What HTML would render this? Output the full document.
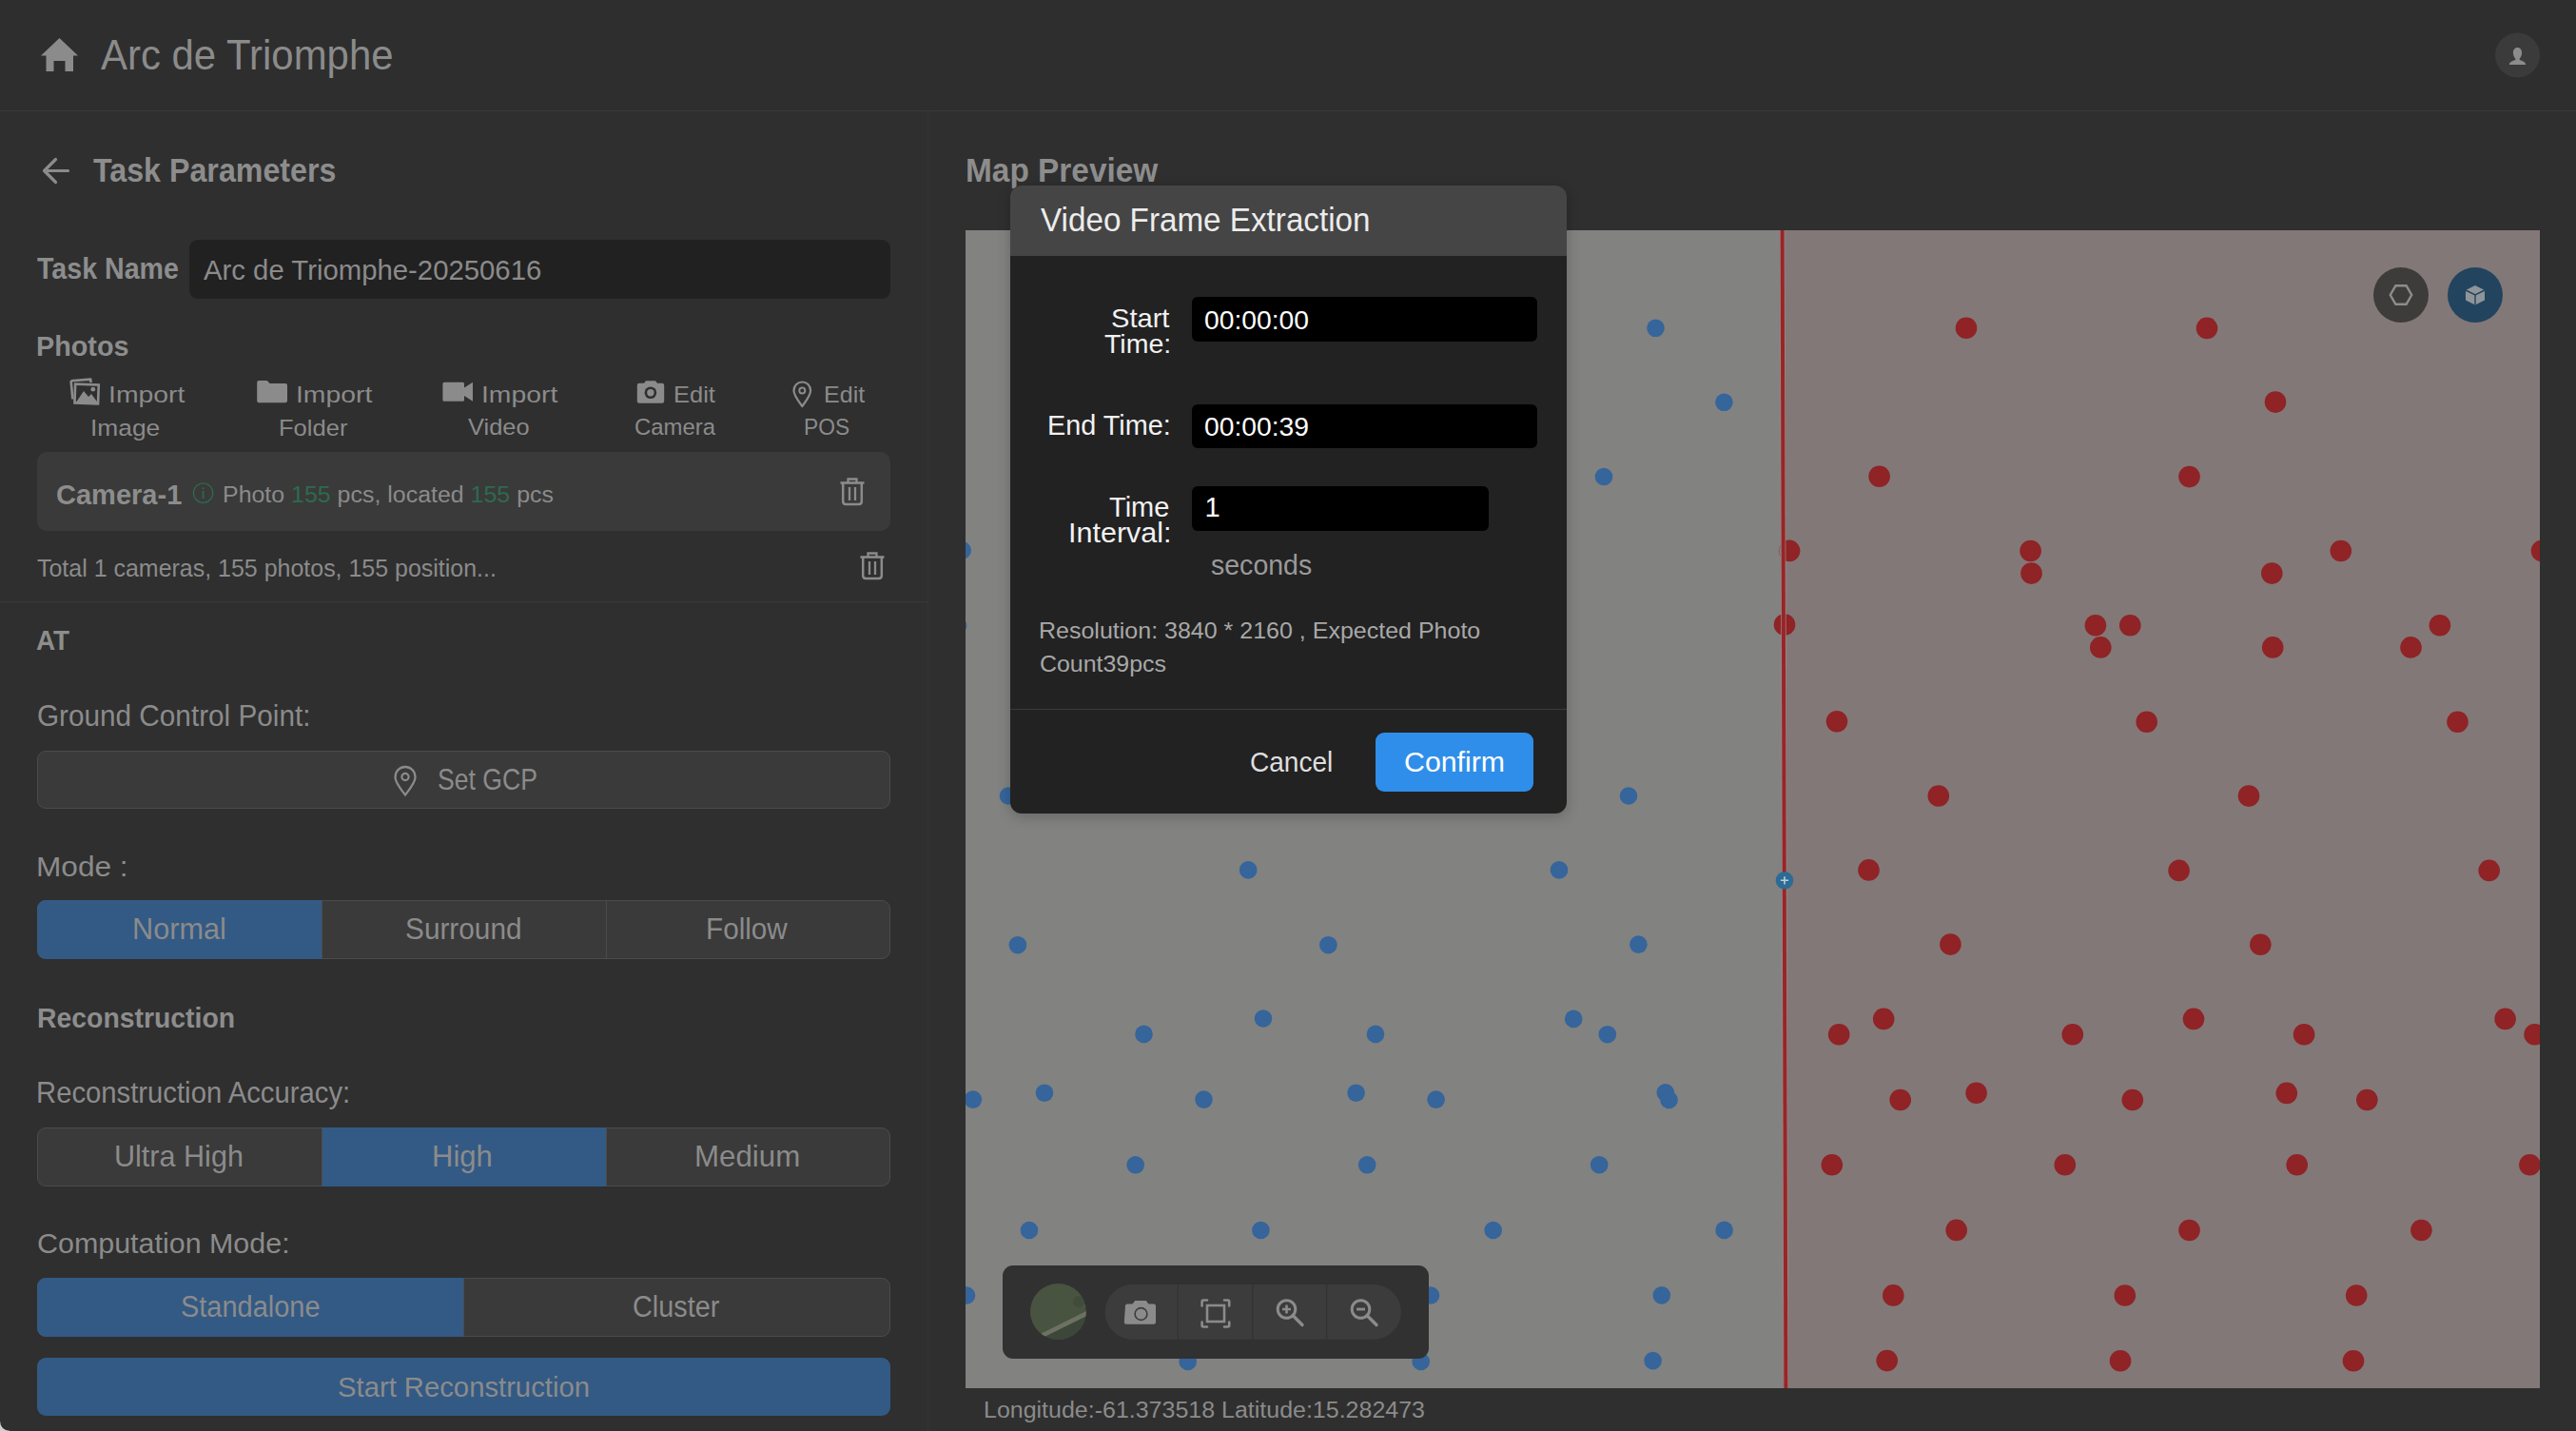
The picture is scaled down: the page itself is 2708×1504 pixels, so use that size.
<!DOCTYPE html>
<html><head><meta charset="utf-8"><style>
html,body{margin:0;padding:0}
body{width:2708px;height:1504px;overflow:hidden;position:relative;background:#2f2f2f;font-family:"Liberation Sans",sans-serif}
.t{position:absolute;white-space:nowrap;line-height:1;transform-origin:0 0}
.g{color:#2d6a4f}
svg{display:block}
</style></head><body>
<div style="position:absolute;left:0px;top:0px;width:2708px;height:116px;background:#2e2e2e;"></div>
<div style="position:absolute;left:0px;top:116px;width:2708px;height:1px;background:#393939;"></div>
<div style="position:absolute;left:975px;top:117px;width:1px;height:1387px;background:#343434;"></div>
<div style="position:absolute;left:0px;top:632px;width:975px;height:1px;background:#393939;"></div>
<svg style="position:absolute;left:0;top:0" width="120" height="100">
<path d="M62.5 40 L82 58.5 L77 58.5 L77 75 L68.5 75 L68.5 64 L56.5 64 L56.5 75 L48.5 75 L48.5 58.5 L43 58.5 Z" fill="#8b8b8b"/></svg>
<div class="t" style="left:105.8px;top:35.4px;font-size:45.2px;font-weight:400;color:#8b8b8b;transform:scaleX(0.9276)">Arc de Triomphe</div>
<svg style="position:absolute;left:2620px;top:32px" width="54" height="54">
<circle cx="26.5" cy="26" r="23.5" fill="#3b3b3b"/>
<path d="M26.5 18 c3.2 0 4.6 2.6 4.6 5.4 c0 2.6 -1.2 4.8 -2.4 6 l0 1.6 c3.2 0.8 5.8 2.2 6.4 4.3 l0 0.7 l-17.2 0 l0 -0.7 c0.6 -2.1 3.2 -3.5 6.4 -4.3 l0 -1.6 c-1.2 -1.2 -2.4 -3.4 -2.4 -6 c0 -2.8 1.4 -5.4 4.6 -5.4 z" fill="#8c8c8c"/></svg>
<svg style="position:absolute;left:40px;top:160px" width="40" height="40">
<path d="M31.5 19.5 H7.5 M18.5 7.5 L6.5 19.5 L18.5 31.5" stroke="#8b8b8b" stroke-width="3.2" fill="none" stroke-linecap="round" stroke-linejoin="round"/></svg>
<div class="t" style="left:97.6px;top:162px;font-size:35.6px;font-weight:700;color:#8d8d8d;transform:scaleX(0.9053)">Task Parameters</div>
<div class="t" style="left:39.4px;top:267px;font-size:31.0px;font-weight:700;color:#8d8d8d;transform:scaleX(0.923)">Task Name</div>
<div style="position:absolute;left:199px;top:252px;width:737px;height:62px;background:#212121;border-radius:9px"></div>
<div class="t" style="left:213.5px;top:269px;font-size:29.8px;font-weight:400;color:#8b8b8b;transform:scaleX(0.9839)">Arc de Triomphe-20250616</div>
<div class="t" style="left:38.06px;top:349px;font-size:29.7px;font-weight:700;color:#8d8d8d;transform:scaleX(0.9694)">Photos</div>
<svg style="position:absolute;left:0;top:390px" width="975" height="45">
 <g transform="translate(0,0)">
  <path d="M74.6 10.2 L95.2 8.6 L95.6 12.2" stroke="#8b8b8b" stroke-width="2.6" fill="none" stroke-linejoin="round"/>
  <path d="M74.6 10.2 L76.4 29.5" stroke="#8b8b8b" stroke-width="2.6" fill="none"/>
  <rect x="78.8" y="14" width="24.6" height="20" stroke="#8b8b8b" stroke-width="2.6" fill="none" transform="rotate(2 91 24)"/>
  <path d="M79.5 33.5 L88 21 L93 27 L96 24 L103 33.5 Z" fill="#8b8b8b"/>
  <circle cx="97.8" cy="19.2" r="2.4" fill="#8b8b8b"/>
 </g>
 <path d="M270.2 12 q0-2 2-2 h8.5 l3 3 h16.3 q2 0 2 2 v16.3 q0 2 -2 2 h-27.8 q-2 0 -2-2 z" fill="#8b8b8b"/>
 <path d="M465.4 13.3 q0-1.5 1.5-1.5 h19.6 q1.5 0 1.5 1.5 v4.2 l9-5.7 v20 l-9 -5.7 v4.2 q0 1.5 -1.5 1.5 h-19.6 q-1.5 0 -1.5 -1.5 z" fill="#8b8b8b"/>
 <path d="M669.8 15 q0-2.2 2.2-2.2 h5 l2-2.5 h10 l2 2.5 h5 q2.2 0 2.2 2.2 v16.4 q0 2.4 -2.2 2.4 h-24 q-2.2 0 -2.2 -2.4 z" fill="#8b8b8b"/>
 <circle cx="683.9" cy="22.8" r="6.3" fill="#2f2f2f"/><circle cx="683.9" cy="22.8" r="3.7" fill="#8b8b8b"/>
 <path d="M843.3 37 C839 31 834.5 25.5 834.5 20.8 C834.5 15.3 838.5 11.5 843.3 11.5 C848.1 11.5 852.1 15.3 852.1 20.8 C852.1 25.5 847.6 31 843.3 37 Z" stroke="#8b8b8b" stroke-width="2.2" fill="none" stroke-linejoin="round"/>
 <circle cx="843.3" cy="20.6" r="3" stroke="#8b8b8b" stroke-width="2" fill="none"/>
</svg>
<div class="t" style="left:113.65px;top:403px;font-size:24.1px;font-weight:400;color:#8b8b8b;transform:scaleX(1.1773)">Import</div>
<div class="t" style="left:94.81px;top:437.5px;font-size:24.1px;font-weight:400;color:#8b8b8b;transform:scaleX(1.0938)">Image</div>
<div class="t" style="left:310.55px;top:403px;font-size:24.1px;font-weight:400;color:#8b8b8b;transform:scaleX(1.1758)">Import</div>
<div class="t" style="left:292.88px;top:437.5px;font-size:24.1px;font-weight:400;color:#8b8b8b;transform:scaleX(1.0606)">Folder</div>
<div class="t" style="left:505.85px;top:403.2px;font-size:24.1px;font-weight:400;color:#8b8b8b;transform:scaleX(1.1758)">Import</div>
<div class="t" style="left:492.0px;top:437.4px;font-size:24.1px;font-weight:400;color:#8b8b8b;transform:scaleX(1.0557)">Video</div>
<div class="t" style="left:707.58px;top:402.6px;font-size:24.1px;font-weight:400;color:#8b8b8b;transform:scaleX(1.0575)">Edit</div>
<div class="t" style="left:666.71px;top:437.4px;font-size:24.1px;font-weight:400;color:#8b8b8b;transform:scaleX(0.9918)">Camera</div>
<div class="t" style="left:865.62px;top:402.6px;font-size:24.1px;font-weight:400;color:#8b8b8b;transform:scaleX(1.04)">Edit</div>
<div class="t" style="left:845.11px;top:437.4px;font-size:24.1px;font-weight:400;color:#8b8b8b;transform:scaleX(0.9458)">POS</div>
<div style="position:absolute;left:39px;top:475px;width:897px;height:83px;background:#3a3a3a;border-radius:10px"></div>
<div class="t" style="left:58.99px;top:505.8px;font-size:28.8px;font-weight:700;color:#8d8d8d;transform:scaleX(1.0077)">Camera-1</div>
<svg style="position:absolute;left:200px;top:505px" width="28" height="28">
<circle cx="13.6" cy="13.1" r="10.2" stroke="#2d6a4f" stroke-width="1.3" fill="none"/>
<rect x="12.8" y="11" width="1.6" height="8" fill="#2d6a4f"/><circle cx="13.6" cy="8.3" r="1" fill="#2d6a4f"/></svg>
<div class="t" style="left:234.48px;top:508px;font-size:24.7px;font-weight:400;color:#8b8b8b;transform:scaleX(1.0099)">Photo <span class="g">155</span> pcs, located <span class="g">155</span> pcs</div>
<svg style="position:absolute;left:882px;top:501px" width="30" height="32">
<path d="M1.5 6.5 H26.5" stroke="#8b8b8b" stroke-width="2.6"/>
<path d="M9.5 6 V2.5 H18.5 V6" stroke="#8b8b8b" stroke-width="2.3" fill="none"/>
<path d="M4.2 7 V26 Q4.2 29 7.2 29 H20.8 Q23.8 29 23.8 26 V7" stroke="#8b8b8b" stroke-width="2.5" fill="none"/>
<path d="M11 11 V25 M17 11 V25" stroke="#8b8b8b" stroke-width="2.3"/></svg>
<div class="t" style="left:39.3px;top:585px;font-size:24.9px;font-weight:400;color:#8b8b8b;transform:scaleX(1.0029)">Total 1 cameras, 155 photos, 155 position...</div>
<svg style="position:absolute;left:903px;top:579px" width="30" height="32">
<path d="M1.5 6.5 H26.5" stroke="#8b8b8b" stroke-width="2.6"/>
<path d="M9.5 6 V2.5 H18.5 V6" stroke="#8b8b8b" stroke-width="2.3" fill="none"/>
<path d="M4.2 7 V26 Q4.2 29 7.2 29 H20.8 Q23.8 29 23.8 26 V7" stroke="#8b8b8b" stroke-width="2.5" fill="none"/>
<path d="M11 11 V25 M17 11 V25" stroke="#8b8b8b" stroke-width="2.3"/></svg>
<div class="t" style="left:38.33px;top:658.8px;font-size:28.8px;font-weight:700;color:#8d8d8d;transform:scaleX(0.9694)">AT</div>
<div class="t" style="left:38.84px;top:737.4px;font-size:31.0px;font-weight:400;color:#8b8b8b;transform:scaleX(0.9586)">Ground Control Point:</div>
<div style="position:absolute;left:39px;top:789px;width:897px;height:61px;background:#3a3a3a;border:1px solid #4b4b4b;box-sizing:border-box;border-radius:9px"></div>
<svg style="position:absolute;left:410px;top:800px" width="32" height="40">
<path d="M16 35.5 C11 29 5.5 22.5 5.5 17 C5.5 10.5 10.2 6 16 6 C21.8 6 26.5 10.5 26.5 17 C26.5 22.5 21 29 16 35.5 Z" stroke="#8b8b8b" stroke-width="2.3" fill="none" stroke-linejoin="round"/>
<circle cx="16" cy="16.5" r="3.6" stroke="#8b8b8b" stroke-width="2.2" fill="none"/></svg>
<div class="t" style="left:459.63px;top:804.2px;font-size:30.5px;font-weight:400;color:#8b8b8b;transform:scaleX(0.8729)">Set GCP</div>
<div class="t" style="left:37.89px;top:896px;font-size:29.9px;font-weight:400;color:#8b8b8b;transform:scaleX(1.0575)">Mode :</div>
<div style="position:absolute;left:39px;top:946px;width:897px;height:62px;background:#3a3a3a;border:1px solid #4b4b4b;box-sizing:border-box;border-radius:9px"></div>
<div style="position:absolute;left:39px;top:946px;width:299px;height:62px;background:#335a84;border-radius:9px 0 0 9px"></div>
<div style="position:absolute;left:338px;top:947px;width:1px;height:60px;background:#4b4b4b;"></div>
<div style="position:absolute;left:637px;top:947px;width:1px;height:60px;background:#4b4b4b;"></div>
<div class="t" style="left:138.93px;top:961.3px;font-size:31.1px;font-weight:400;color:#8b8b8b;transform:scaleX(0.9856)">Normal</div>
<div class="t" style="left:426.04px;top:961.3px;font-size:31.1px;font-weight:400;color:#8b8b8b;transform:scaleX(0.9584)">Surround</div>
<div class="t" style="left:742.09px;top:961.3px;font-size:31.1px;font-weight:400;color:#8b8b8b;transform:scaleX(0.9545)">Follow</div>
<div class="t" style="left:38.51px;top:1054.7px;font-size:30.1px;font-weight:700;color:#8d8d8d;transform:scaleX(0.9429)">Reconstruction</div>
<div class="t" style="left:37.88px;top:1133px;font-size:30.5px;font-weight:400;color:#8b8b8b;transform:scaleX(0.9594)">Reconstruction Accuracy:</div>
<div style="position:absolute;left:39px;top:1184.5px;width:897px;height:62px;background:#3a3a3a;border:1px solid #4b4b4b;box-sizing:border-box;border-radius:9px"></div>
<div style="position:absolute;left:337.5px;top:1184.5px;width:299.5px;height:62px;background:#335a84;"></div>
<div style="position:absolute;left:337.5px;top:1185.5px;width:1px;height:60px;background:#4b4b4b;"></div>
<div style="position:absolute;left:637px;top:1185.5px;width:1px;height:60px;background:#4b4b4b;"></div>
<div class="t" style="left:120.23px;top:1199.8px;font-size:31.1px;font-weight:400;color:#8b8b8b;transform:scaleX(0.983)">Ultra High</div>
<div class="t" style="left:454.4px;top:1199.8px;font-size:31.1px;font-weight:400;color:#8b8b8b;transform:scaleX(0.9984)">High</div>
<div class="t" style="left:729.89px;top:1199.8px;font-size:31.1px;font-weight:400;color:#8b8b8b;transform:scaleX(1.0056)">Medium</div>
<div class="t" style="left:38.78px;top:1292px;font-size:29.8px;font-weight:400;color:#8b8b8b;transform:scaleX(1.0214)">Computation Mode:</div>
<div style="position:absolute;left:39px;top:1342.5px;width:897px;height:62px;background:#3a3a3a;border:1px solid #4b4b4b;box-sizing:border-box;border-radius:9px"></div>
<div style="position:absolute;left:39px;top:1342.5px;width:447.5px;height:62px;background:#335a84;border-radius:9px 0 0 9px"></div>
<div style="position:absolute;left:486.5px;top:1343.5px;width:1px;height:60px;background:#4b4b4b;"></div>
<div class="t" style="left:189.66px;top:1358.6px;font-size:30.8px;font-weight:400;color:#8b8b8b;transform:scaleX(0.9403)">Standalone</div>
<div class="t" style="left:665.46px;top:1358.6px;font-size:30.8px;font-weight:400;color:#8b8b8b;transform:scaleX(0.9365)">Cluster</div>
<div style="position:absolute;left:39px;top:1426.5px;width:897px;height:61px;background:#335a84;border-radius:9px"></div>
<div class="t" style="left:355.02px;top:1443.3px;font-size:29.8px;font-weight:400;color:#8b8b8b;transform:scaleX(0.9813)">Start Reconstruction</div>
<div class="t" style="left:1014.9px;top:161px;font-size:35.2px;font-weight:700;color:#8d8d8d;transform:scaleX(0.9491)">Map Preview</div>
<div style="position:absolute;left:1015px;top:242px;width:859px;height:1217px;background:#828281;"></div>
<div style="position:absolute;left:1874px;top:242px;width:796px;height:1217px;background:#827877;"></div>
<svg style="position:absolute;left:1015px;top:242px" width="1655" height="1217" viewBox="1015 242 1655 1217"><circle cx="1740.5" cy="344.8" r="9.3" fill="#35659a"/><circle cx="1812.4" cy="422.8" r="9.3" fill="#35659a"/><circle cx="1686" cy="501" r="9.3" fill="#35659a"/><circle cx="1011.7" cy="578.5" r="9.3" fill="#35659a"/><circle cx="1007" cy="657.5" r="9.3" fill="#35659a"/><circle cx="1060" cy="836.5" r="9.3" fill="#35659a"/><circle cx="1712" cy="836.5" r="9.3" fill="#35659a"/><circle cx="1312.2" cy="914.4" r="9.3" fill="#35659a"/><circle cx="1639" cy="914.4" r="9.3" fill="#35659a"/><circle cx="1069.9" cy="993.2" r="9.3" fill="#35659a"/><circle cx="1396.4" cy="993.2" r="9.3" fill="#35659a"/><circle cx="1722.4" cy="992.6" r="9.3" fill="#35659a"/><circle cx="1202.5" cy="1086.9" r="9.3" fill="#35659a"/><circle cx="1328" cy="1070.5" r="9.3" fill="#35659a"/><circle cx="1446" cy="1086.9" r="9.3" fill="#35659a"/><circle cx="1654.2" cy="1070.9" r="9.3" fill="#35659a"/><circle cx="1689.8" cy="1087.2" r="9.3" fill="#35659a"/><circle cx="1022.9" cy="1155.6" r="9.3" fill="#35659a"/><circle cx="1098" cy="1148.7" r="9.3" fill="#35659a"/><circle cx="1265.5" cy="1155.6" r="9.3" fill="#35659a"/><circle cx="1425.6" cy="1148.7" r="9.3" fill="#35659a"/><circle cx="1509.6" cy="1155.6" r="9.3" fill="#35659a"/><circle cx="1750.8" cy="1148.3" r="9.3" fill="#35659a"/><circle cx="1754.5" cy="1156" r="9.3" fill="#35659a"/><circle cx="1193.7" cy="1224.3" r="9.3" fill="#35659a"/><circle cx="1437.2" cy="1224.3" r="9.3" fill="#35659a"/><circle cx="1681.2" cy="1224.2" r="9.3" fill="#35659a"/><circle cx="1082" cy="1293" r="9.3" fill="#35659a"/><circle cx="1325.4" cy="1293" r="9.3" fill="#35659a"/><circle cx="1569.7" cy="1293" r="9.3" fill="#35659a"/><circle cx="1812.6" cy="1292.9" r="9.3" fill="#35659a"/><circle cx="1016" cy="1361.5" r="9.3" fill="#35659a"/><circle cx="1504" cy="1361.5" r="9.3" fill="#35659a"/><circle cx="1746.8" cy="1361.4" r="9.3" fill="#35659a"/><circle cx="1248.7" cy="1431" r="9.3" fill="#35659a"/><circle cx="1493.7" cy="1431" r="9.3" fill="#35659a"/><circle cx="1737.6" cy="1430.1" r="9.3" fill="#35659a"/><defs><clipPath id="rc"><rect x="1874.3" y="560" width="40" height="40"/></clipPath></defs><circle cx="2067" cy="344.8" r="11.3" fill="#8f2326"/><circle cx="2320" cy="344.9" r="11.3" fill="#8f2326"/><circle cx="2392" cy="422.6" r="11.3" fill="#8f2326"/><circle cx="1975.6" cy="500.7" r="11.3" fill="#8f2326"/><circle cx="2301.5" cy="501.1" r="11.3" fill="#8f2326"/><circle cx="1881" cy="578.9" r="11.3" fill="#8f2326" clip-path="url(#rc)"/><circle cx="1881" cy="578.9" r="10.8" fill="none" stroke="#8f2326" stroke-width="0.8" opacity="0.5"/><circle cx="2134.6" cy="579" r="11.3" fill="#8f2326"/><circle cx="2460.8" cy="579" r="11.3" fill="#8f2326"/><circle cx="2672" cy="579" r="11.3" fill="#8f2326"/><circle cx="2135.5" cy="602.6" r="11.3" fill="#8f2326"/><circle cx="2388.3" cy="602.6" r="11.3" fill="#8f2326"/><circle cx="1876" cy="656.6" r="11.3" fill="#8f2326"/><circle cx="2202.9" cy="657.2" r="11.3" fill="#8f2326"/><circle cx="2239.3" cy="657.2" r="11.3" fill="#8f2326"/><circle cx="2564.9" cy="657.2" r="11.3" fill="#8f2326"/><circle cx="2208.3" cy="680.4" r="11.3" fill="#8f2326"/><circle cx="2389.2" cy="680.4" r="11.3" fill="#8f2326"/><circle cx="2534.5" cy="680.4" r="11.3" fill="#8f2326"/><circle cx="1931" cy="758.3" r="11.3" fill="#8f2326"/><circle cx="2256.7" cy="758.7" r="11.3" fill="#8f2326"/><circle cx="2583.5" cy="758.7" r="11.3" fill="#8f2326"/><circle cx="2037.8" cy="836.5" r="11.3" fill="#8f2326"/><circle cx="2364" cy="836.6" r="11.3" fill="#8f2326"/><circle cx="1964.5" cy="914.4" r="11.3" fill="#8f2326"/><circle cx="2290.6" cy="914.9" r="11.3" fill="#8f2326"/><circle cx="2616.7" cy="914.9" r="11.3" fill="#8f2326"/><circle cx="2050.4" cy="992.6" r="11.3" fill="#8f2326"/><circle cx="2376.3" cy="992.8" r="11.3" fill="#8f2326"/><circle cx="1980.2" cy="1070.9" r="11.3" fill="#8f2326"/><circle cx="1933.2" cy="1087.2" r="11.3" fill="#8f2326"/><circle cx="2178.8" cy="1087.3" r="11.3" fill="#8f2326"/><circle cx="2306" cy="1070.9" r="11.3" fill="#8f2326"/><circle cx="2422.1" cy="1087.3" r="11.3" fill="#8f2326"/><circle cx="2633.6" cy="1070.9" r="11.3" fill="#8f2326"/><circle cx="2664.6" cy="1087.3" r="11.3" fill="#8f2326"/><circle cx="1997.7" cy="1156" r="11.3" fill="#8f2326"/><circle cx="2077.6" cy="1148.8" r="11.3" fill="#8f2326"/><circle cx="2241.8" cy="1156" r="11.3" fill="#8f2326"/><circle cx="2403.8" cy="1148.9" r="11.3" fill="#8f2326"/><circle cx="2488.3" cy="1156" r="11.3" fill="#8f2326"/><circle cx="1925.8" cy="1224.2" r="11.3" fill="#8f2326"/><circle cx="2170.8" cy="1224.3" r="11.3" fill="#8f2326"/><circle cx="2414.7" cy="1224.3" r="11.3" fill="#8f2326"/><circle cx="2659.4" cy="1224.3" r="11.3" fill="#8f2326"/><circle cx="2056.7" cy="1292.9" r="11.3" fill="#8f2326"/><circle cx="2301.5" cy="1293" r="11.3" fill="#8f2326"/><circle cx="2545.4" cy="1293" r="11.3" fill="#8f2326"/><circle cx="1990.3" cy="1361.4" r="11.3" fill="#8f2326"/><circle cx="2233.8" cy="1361.5" r="11.3" fill="#8f2326"/><circle cx="2477.2" cy="1361.5" r="11.3" fill="#8f2326"/><circle cx="1983.7" cy="1430.1" r="11.3" fill="#8f2326"/><circle cx="2229" cy="1430.3" r="11.3" fill="#8f2326"/><circle cx="2474" cy="1430.3" r="11.3" fill="#8f2326"/><line x1="1873.6" y1="242" x2="1877.4" y2="1459" stroke="#a88482" stroke-width="5.4"/><line x1="1873.6" y1="242" x2="1877.4" y2="1459" stroke="#962628" stroke-width="4"/><circle cx="1876" cy="925.3" r="9.3" fill="#2b6c96"/><path d="M1876 921.2 V929.4 M1871.9 925.3 H1880.1" stroke="#c0ccd3" stroke-width="1.6"/></svg>
<svg style="position:absolute;left:2490px;top:276px" width="150" height="70">
<circle cx="34" cy="34" r="29" fill="#3e3b3b"/>
<path d="M28.4 24.2 H39.6 L45.2 34 L39.6 43.8 H28.4 L22.8 34 Z" stroke="#8d8d8d" stroke-width="2.4" fill="none" stroke-linejoin="miter"/>
<circle cx="112" cy="34" r="29" fill="#22445f"/>
<path d="M112 24 L122 29 L122 39.5 L112 44.5 L102 39.5 L102 29 Z" fill="#8f9599"/>
<path d="M102 29 L112 34 L122 29 M112 34 V44.5" stroke="#22445f" stroke-width="1.4" fill="none"/>
</svg>
<div style="position:absolute;left:1054px;top:1330px;width:448px;height:98px;background:#313131;border-radius:11px"></div>
<svg style="position:absolute;left:1054px;top:1330px" width="448" height="98">
<defs><clipPath id="cc"><circle cx="58.4" cy="48.4" r="29.5"/></clipPath></defs>
<circle cx="58.4" cy="48.4" r="29.4" fill="#485340"/>
<g clip-path="url(#cc)">
 <path d="M20 86.5 L100 47 L100 100 L20 100 Z" fill="#3d4739"/>
 <path d="M20 84.2 L100 44.8" stroke="#6d7163" stroke-width="4.7"/>
 <circle cx="44" cy="44" r="10" fill="#4b5342" opacity="0.6"/><circle cx="80" cy="38" r="6" fill="#3e4a38" opacity="0.7"/>
</g>
<rect x="107.6" y="20" width="311.3" height="57.8" rx="28.9" fill="#3c3c3c"/>
<rect x="183.6" y="20" width="1.3" height="57.8" fill="#333"/>
<rect x="262" y="20" width="1.3" height="57.8" fill="#333"/>
<rect x="340" y="20" width="1.3" height="57.8" fill="#333"/>
<path d="M129 42.6 q0-2.2 2.2-2.2 h5.4 l2.6-3.4 h11.6 l2.6 3.4 h5.4 q2.2 0 2.2 2.2 v17 q0 2.2 -2.2 2.2 h-28.8 q-2.2 0 -2.2 -2.2 z" fill="#8b8b8b"/>
<circle cx="145.5" cy="51" r="6.4" stroke="#3c3c3c" stroke-width="1.6" fill="none"/>
<path d="M209.6 42.5 V38 Q209.6 36.5 211.1 36.5 H215 M233 36.5 H236.7 Q238.2 36.5 238.2 38 V42.5 M238.2 59.5 V63 Q238.2 64.5 236.7 64.5 H233 M215 64.5 H211.1 Q209.6 64.5 209.6 63 V59.5" stroke="#8b8b8b" stroke-width="2.6" fill="none" stroke-linecap="round"/>
<rect x="215" y="42" width="18" height="17" stroke="#8b8b8b" stroke-width="2.6" fill="none"/>
<circle cx="298.5" cy="46" r="9.3" stroke="#8b8b8b" stroke-width="3" fill="none"/>
<path d="M305 52.5 L315 62.5" stroke="#8b8b8b" stroke-width="3.4" stroke-linecap="round"/>
<path d="M298.5 41.5 V50.5 M294 46 H303" stroke="#8b8b8b" stroke-width="2.6"/>
<circle cx="376.5" cy="46" r="9.3" stroke="#8b8b8b" stroke-width="3" fill="none"/>
<path d="M383 52.5 L393 62.5" stroke="#8b8b8b" stroke-width="3.4" stroke-linecap="round"/>
<path d="M372 46 H381" stroke="#8b8b8b" stroke-width="2.8"/>
</svg>
<div class="t" style="left:1033.76px;top:1471.4px;font-size:23.3px;font-weight:400;color:#8b8b8b;transform:scaleX(1.0723)">Longitude:-61.373518 Latitude:15.282473</div>
<div style="position:absolute;left:1062px;top:195px;width:585px;height:660px;background:#222222;border-radius:12px;box-shadow:0 3px 14px rgba(0,0,0,0.22)"></div>
<div style="position:absolute;left:1062px;top:195px;width:585px;height:74px;background:#454545;border-radius:12px 12px 0 0"></div>
<div class="t" style="left:1093.8px;top:213.9px;font-size:34.9px;font-weight:400;color:#ececec;transform:scaleX(0.9522)">Video Frame Extraction</div>
<div style="position:absolute;left:1253px;top:312px;width:363px;height:47px;background:#000;border-radius:6px"></div>
<div style="position:absolute;left:1253px;top:425px;width:363px;height:46px;background:#000;border-radius:6px"></div>
<div style="position:absolute;left:1253px;top:511px;width:312px;height:47px;background:#000;border-radius:6px"></div>
<div class="t" style="left:1167.78px;top:319.8px;font-size:28.5px;font-weight:400;color:#f2f2f2;transform:scaleX(1.0203)">Start</div>
<div class="t" style="left:1161.0px;top:347px;font-size:28.5px;font-weight:400;color:#f2f2f2;transform:scaleX(1.0)">Time:</div>
<div class="t" style="left:1266.01px;top:321.9px;font-size:28.5px;font-weight:400;color:#ffffff;transform:scaleX(0.9908)">00:00:00</div>
<div class="t" style="left:1101.0px;top:433.2px;font-size:28.8px;font-weight:400;color:#f2f2f2;transform:scaleX(1.0)">End Time:</div>
<div class="t" style="left:1266.01px;top:434.4px;font-size:28.5px;font-weight:400;color:#ffffff;transform:scaleX(0.9908)">00:00:39</div>
<div class="t" style="left:1166.4px;top:519px;font-size:29.1px;font-weight:400;color:#f2f2f2;transform:scaleX(0.9968)">Time</div>
<div class="t" style="left:1123.3px;top:546px;font-size:29.1px;font-weight:400;color:#f2f2f2;transform:scaleX(1.0485)">Interval:</div>
<div class="t" style="left:1266.4px;top:519px;font-size:29.1px;font-weight:400;color:#ffffff;transform:scaleX(1.0)">1</div>
<div class="t" style="left:1272.53px;top:578.8px;font-size:29.5px;font-weight:400;color:#9a9a9a;transform:scaleX(0.9667)">seconds</div>
<div class="t" style="left:1091.94px;top:650.7px;font-size:24.3px;font-weight:400;color:#a8a8a8;transform:scaleX(1.029)">Resolution: 3840 * 2160 , Expected Photo</div>
<div class="t" style="left:1093.07px;top:685.8px;font-size:24.3px;font-weight:400;color:#a8a8a8;transform:scaleX(1.025)">Count39pcs</div>
<div style="position:absolute;left:1062px;top:745px;width:585px;height:1px;background:#3b3b3b;"></div>
<div class="t" style="left:1313.54px;top:787px;font-size:29.1px;font-weight:400;color:#dedede;transform:scaleX(0.9636)">Cancel</div>
<div style="position:absolute;left:1446px;top:770px;width:166px;height:62px;background:#2f8ee9;border-radius:9px"></div>
<div class="t" style="left:1476.26px;top:787px;font-size:29.1px;font-weight:400;color:#ffffff;transform:scaleX(1.0414)">Confirm</div>
<svg style="position:absolute;left:0;top:1484px" width="20" height="20"><path d="M0 9.5 Q0.5 19.5 11 20 H0 Z" fill="#d0d0d0"/></svg>

</body></html>
